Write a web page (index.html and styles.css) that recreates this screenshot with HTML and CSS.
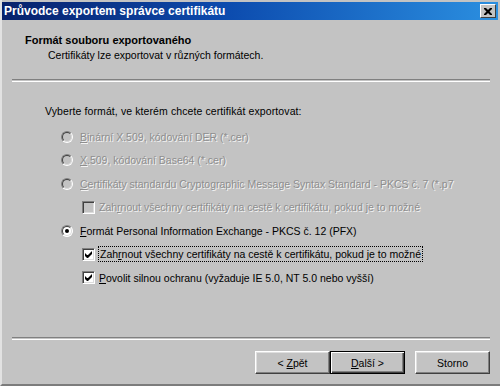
FILE: index.html
```html
<!DOCTYPE html>
<html lang="cs">
<head>
	<meta charset="UTF-8">
	<title>Průvodce exportem správce certifikátu</title>
	<link rel="stylesheet" href="styles.css">
</head>
<body>
	<div class="window">
		<div class="titlebar">
			<span class="title">Průvodce exportem správce certifikátu</span>
			<span class="close">
				<svg width="8" height="7" viewBox="0 0 8 7"><path d="M0 0h2l2 2 2-2h2v1l-2.5 2.5 2.5 2.5v1h-2l-2-2-2 2h-2v-1l2.5-2.5-2.5-2.5z" fill="#000"/></svg>
			</span>
		</div>
		<div class="header">
			<div class="head-title">Formát souboru exportovaného</div>
			<div class="head-sub">Certifikáty lze exportovat v různých formátech.</div>
		</div>
		<div class="sep"></div>
		<div class="content">
			<p class="prompt">Vyberte formát, ve kterém chcete certifikát exportovat:</p>
			<div class="opt disabled">
				<span class="rb"></span>
				<span><u>B</u>inární X.509, kódování DER (*.cer)</span>
			</div>
			<div class="opt disabled">
				<span class="rb"></span>
				<span><u>X</u>.509, kódování Base64 (*.cer)</span>
			</div>
			<div class="opt disabled">
				<span class="rb"></span>
				<span><u>C</u>ertifikáty standardu Cryptographic Message Syntax Standard - PKCS č. 7 (*.p7</span>
			</div>
			<div class="opt sub disabled">
				<span class="cb"></span>
				<span>Zah<u>r</u>nout všechny certifikáty na cestě k certifikátu, pokud je to možné</span>
			</div>
			<div class="opt">
				<span class="rb checked"></span>
				<span><u>F</u>ormát Personal Information Exchange - PKCS č. 12 (PFX)</span>
			</div>
			<div class="opt sub">
				<span class="cb">
					<svg width="7" height="7" viewBox="0 0 7 7"><path d="M0 2v3l2 2h1l4-4v-3l-4 4h-1z" fill="#000"/></svg>
				</span>
				<span class="focus">Zah<u>r</u>nout všechny certifikáty na cestě k certifikátu, pokud je to možné</span>
			</div>
			<div class="opt sub">
				<span class="cb">
					<svg width="7" height="7" viewBox="0 0 7 7"><path d="M0 2v3l2 2h1l4-4v-3l-4 4h-1z" fill="#000"/></svg>
				</span>
				<span><u>P</u>ovolit silnou ochranu (vyžaduje IE 5.0, NT 5.0 nebo vyšší)</span>
			</div>
		</div>
		<div class="sep"></div>
		<div class="buttons">
			<a class="btn"><span>&lt; <u>Z</u>pět</span></a>
			<a class="btn default"><span><u>D</u>alší &gt;</span></a>
			<a class="btn cancel"><span>Storno</span></a>
		</div>
	</div>
</body>
</html>
```

FILE: styles.css
```css
html, body{
	margin: 0;
	padding: 0;
	background: #c3c3c3;
}
.window{
	width: 500px;
	height: 386px;
	box-sizing: border-box;
	border-left: 2px solid #e2e2e2;
	border-bottom: 2px solid #7c7c7c;
	display: flex;
	flex-direction: column;
	font-family: "Liberation Sans", Arial, sans-serif;
	font-size: 10.5px;
	color: #000;
}
.titlebar{
	margin-top: 2px;
	margin-right: 2px;
	height: 18px;
	background: linear-gradient(90deg, #08216b 0%, #0c4bae 45%, #2b8fe0 100%);
	display: flex;
	align-items: center;
	justify-content: space-between;
	padding: 0 2px 0 2px;
}
.title{
	color: #fff;
	font-weight: bold;
	font-size: 12px;
}
.close{
	width: 14px;
	height: 12px;
	background: #c3c3c3;
	border: 1px solid;
	border-color: #fff #404040 #404040 #fff;
	display: flex;
	align-items: center;
	justify-content: center;
}
.header{
	height: 59px;
	box-sizing: border-box;
	padding: 13px 0 0 23px;
}
.head-title{
	font-weight: bold;
	font-size: 11px;
	line-height: 14px;
}
.head-sub{
	margin: 1px 0 0 23px;
	line-height: 14px;
}
.sep{
	margin: 0 10px 0 10px;
	height: 1px;
	border-top: 1px solid #808080;
	border-bottom: 1px solid #fff;
}
.content{
	flex: 1;
	padding: 22px 0 0 43px;
}
.prompt{
	margin: 0 0 7px 0;
	line-height: 14px;
	letter-spacing: 0.1px;
}
.opt{
	height: 23.5px;
	display: flex;
	align-items: center;
	padding-left: 16px;
	white-space: nowrap;
}
.opt.sub{
	padding-left: 37px;
}
.disabled{
	color: #8e8e8e;
	text-shadow: 1px 1px 0 #f4f4f4;
}
.rb{
	position: relative;
	width: 12px;
	height: 12px;
	box-sizing: border-box;
	border-radius: 50%;
	border: 1px solid;
	border-color: #808080 #fff #fff #808080;
	background: #fff;
	margin-right: 7px;
	flex: none;
}
.rb::before{
	content: "";
	position: absolute;
	left: 0;
	top: 0;
	right: 0;
	bottom: 0;
	border-radius: 50%;
	border: 1px solid;
	border-color: #404040 #dcdcdc #dcdcdc #404040;
}
.disabled .rb{
	background: #c3c3c3;
}
.rb.checked::after{
	content: "";
	position: absolute;
	left: 3px;
	top: 3px;
	width: 4px;
	height: 4px;
	border-radius: 50%;
	background: #000;
}
.cb{
	width: 13px;
	height: 13px;
	box-sizing: border-box;
	border: 1px solid;
	border-color: #808080 #fff #fff #808080;
	box-shadow: inset 1px 1px 0 #404040, inset -1px -1px 0 #dcdcdc;
	background: #fff;
	margin-right: 4px;
	flex: none;
	display: flex;
	align-items: center;
	justify-content: center;
}
.disabled .cb{
	background: #c3c3c3;
}
.focus{
	border: 1px dotted #000;
	padding: 1px 1px;
	margin-left: -1px;
}
.buttons{
	display: flex;
	justify-content: flex-end;
	padding: 11px 10px 10px 0;
}
.btn{
	width: 75px;
	height: 23px;
	box-sizing: border-box;
	display: flex;
	align-items: center;
	justify-content: center;
	background: #c3c3c3;
	border: 1px solid;
	border-color: #fff #404040 #404040 #fff;
	box-shadow: inset -1px -1px 0 #808080, inset 1px 1px 0 #dfdfdf;
	color: #000;
	text-decoration: none;
}
.btn.default{
	border: 1px solid #000;
	box-shadow: inset 1px 1px 0 #fff, inset -1px -1px 0 #404040, inset -2px -2px 0 #808080;
}
.btn.cancel{
	margin-left: 10px;
}
```
